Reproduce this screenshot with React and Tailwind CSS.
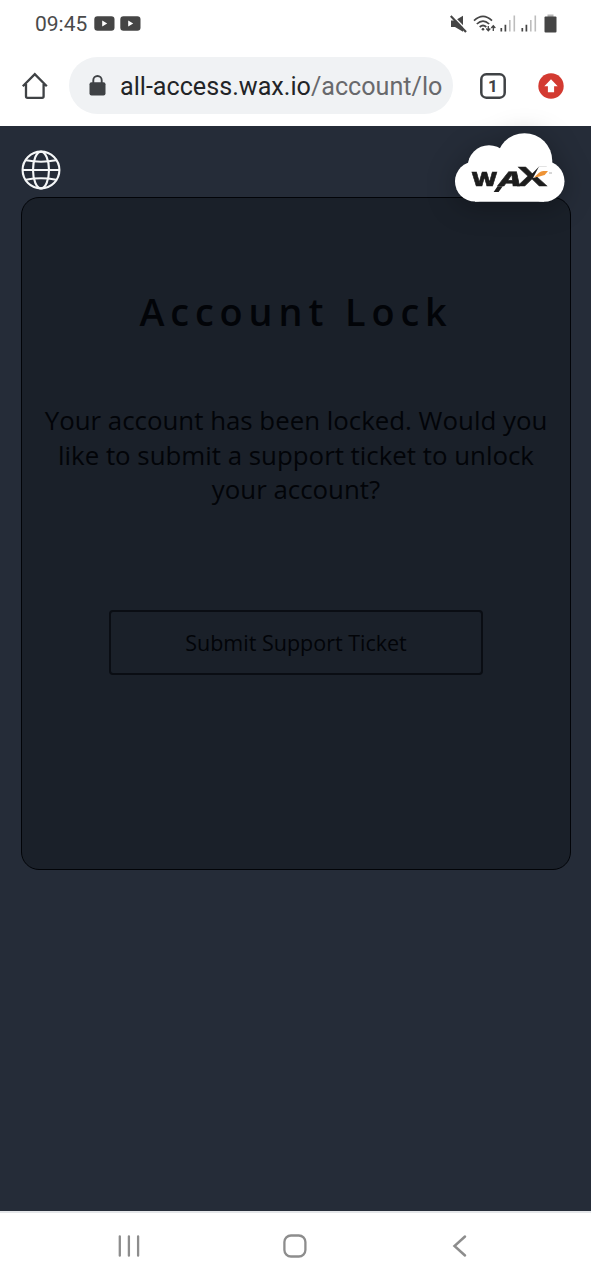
import React from "react";

function YouTubeBadge() {
  return (
    <svg className="h-[15px] w-[21px]" viewBox="0 0 21 15">
      <rect x="0.3" y="0.3" width="20.2" height="14.4" rx="3.2" fill="#454545" />
      <path d="M8.2 4.5v6l5-3z" fill="#fff" />
    </svg>
  );
}

function Signal() {
  return (
    <svg className="h-[17px] w-[16px]" viewBox="0 0 16 17">
      <path d="M1.3 13v3.5M5.4 9.8v6.7" stroke="#454545" strokeWidth="1.7" />
      <path d="M9.8 5v11.5M14.3 0.5v16" stroke="#bdbdbd" strokeWidth="1.6" />
    </svg>
  );
}

function StatusBar() {
  return (
    <div className="flex h-12 items-center pl-[35px] pr-[34px]">
      <span className="w-[53px] whitespace-nowrap font-[Roboto,sans-serif] text-[21px] leading-6 text-[#4a4a4a]">09:45</span>
      <div className="mb-[2px] ml-[6px] flex gap-[5px]">
        <YouTubeBadge />
        <YouTubeBadge />
      </div>
      <div className="mb-px ml-auto flex items-center">
        <svg className="h-[18px] w-[17px]" viewBox="0 0 17 18">
          <path d="M1 5.5h4L13 0.8v16L5 12H1z" fill="#454545" />
          <path d="M2.2 0.3L17 15.5" stroke="#fff" strokeWidth="1.6" />
          <path d="M0.7 1L16 17" stroke="#454545" strokeWidth="2.2" />
        </svg>
        <svg className="ml-[6px] h-[18px] w-[24px]" viewBox="0 0 24 18">
          <path d="M1 5.7Q10 -2.8 19 5.7M3.8 9Q10 3.2 16.2 9M6.7 12Q10 9 13.3 12" fill="none" stroke="#454545" strokeWidth="1.7" />
          <circle cx="10" cy="14.2" r="1.3" fill="#454545" />
          <path d="M15.3 11v4.6M13.3 13.5l2 2.3 2-2.3M20.3 16v-4.6M18.3 13l2-2.3 2 2.3" fill="none" stroke="#454545" strokeWidth="1.3" />
        </svg>
        <div className="ml-[3px] flex gap-[5px]">
          <Signal />
          <Signal />
        </div>
        <svg className="ml-[7px] h-[19px] w-[13px]" viewBox="0 0 13 19">
          <rect x="3.5" y="0.5" width="6" height="3" fill="#b5b5b5" />
          <rect x="0.5" y="2.5" width="12" height="16" rx="1" fill="#454545" />
        </svg>
      </div>
    </div>
  );
}

function BrowserBar() {
  return (
    <div className="flex h-[78px] items-center pb-[3px] pl-[21px] font-[Roboto,sans-serif]">
      <svg className="h-[28px] w-[28px]" viewBox="0 0 28 28">
        <path d="M1.8 14.3L13.8 2.2 25.8 14.3M5 12v12.3q0 1.5 1.5 1.5h14.6q1.5 0 1.5-1.5V12" fill="none" stroke="#3f4245" strokeWidth="2.3" />
      </svg>
      <div className="ml-5 flex h-[57px] w-[384px] items-center rounded-full bg-[#f0f2f4] pl-[20px]">
        <svg className="h-[21px] w-[17px]" viewBox="0 0 17 21">
          <path d="M4.3 9V5.2a4.2 4.2 0 0 1 8.4 0V9" fill="none" stroke="#3f4245" strokeWidth="1.9" />
          <rect x="0.5" y="7.3" width="16" height="13.2" rx="2" fill="#3f4245" />
        </svg>
        <span className="ml-[14px] mt-[2px] whitespace-nowrap text-[25.15px] leading-8 text-[#222427]">
          all-access.wax.io<span className="text-[#68696c]">/account/lo</span>
        </span>
      </div>
      <svg className="ml-[27px] h-[26px] w-[26px]" viewBox="0 0 26 26">
        <rect x="1.3" y="1.3" width="23.4" height="23.4" rx="5" fill="none" stroke="#3f4245" strokeWidth="2.5" />
        <text x="13" y="18.8" textAnchor="middle" fontSize="17" fontWeight="700" fontFamily="Roboto, sans-serif" fill="#3f4245">1</text>
      </svg>
      <svg className="ml-[31.5px] h-[26px] w-[26px]" viewBox="0 0 26 26">
        <circle cx="13" cy="13" r="12.7" fill="#d33a31" />
        <path d="M13 6.2l6.7 7h-3.6v6h-6.2v-6H6.3z" fill="#fff" />
      </svg>
    </div>
  );
}

function WaxLogo() {
  return (
    <svg className="h-[70px] w-[110px] drop-shadow-[0_4px_14px_rgba(0,0,0,0.3)]" viewBox="0 0 110 70">
      <g fill="#fff">
        <circle cx="20" cy="49.5" r="20" />
        <circle cx="34" cy="34.5" r="21.3" />
        <circle cx="69.5" cy="29" r="27.8" />
        <circle cx="89" cy="49.3" r="20.5" />
        <path d="M20 30h69v39.8H20z" />
      </g>
      <g fontFamily="Open Sans, sans-serif" fill="#1d1d1d" stroke="#1d1d1d">
        <text transform="translate(16.6 54.4) scale(1.36 1)" fontWeight="800" fontSize="19.5" strokeWidth="0.5" textLength="19" lengthAdjust="spacingAndGlyphs">W</text>
        <text transform="translate(42.5 54.4) skewX(-16)" fontWeight="800" fontSize="20" strokeWidth="0.5" textLength="22" lengthAdjust="spacingAndGlyphs">A</text>
        <text transform="translate(62.5 54.4)" fontWeight="700" fontSize="26" strokeWidth="0.4" textLength="29.5" lengthAdjust="spacingAndGlyphs">X</text>
      </g>
      <path d="M38.6 60l4-5.8h5.2l-4.2 5.8z" fill="#1d1d1d" />
      <path d="M78 46L84 34.5h12v6z" fill="#fff" />
      <path d="M79 45.5l5-4.8q2-1.8 4.3-1.8h4.7l-3.3 4.2-6.2 1.6z" fill="#ee9437" />
      <path d="M94 41h3" stroke="#999" strokeWidth="0.8" />
    </svg>
  );
}

function Globe() {
  return (
    <svg className="ml-[-0.5px] h-10 w-10" viewBox="0 0 40 40" fill="none" stroke="#f5f7f8" strokeWidth="2.1">
      <circle cx="20" cy="20" r="18.4" />
      <ellipse cx="20" cy="20" rx="8" ry="18.4" />
      <path d="M1.5 20h37M5 10.3q15 2.8 30 0M5 29.7q15-2.8 30 0" />
    </svg>
  );
}

function AndroidNav() {
  return (
    <div className="flex h-[69px] items-start justify-between border-t-2 border-[#e4e6e9] bg-white px-[117px] pt-[21px]">
      <svg className="h-[24px] w-[24px]" viewBox="0 0 24 24" stroke="#8d8d8d" strokeWidth="2.3" strokeLinecap="round">
        <path d="M2.8 2.3v19.4M11.9 2.3v19.4M21.1 2.3v19.4" />
      </svg>
      <svg className="h-[24px] w-[24px] overflow-visible" viewBox="0 0 24 24" fill="none" stroke="#8d8d8d" strokeWidth="2.3">
        <rect x="0.4" y="1.5" width="21" height="21" rx="6.6" />
      </svg>
      <svg className="h-[24px] w-[24px]" viewBox="0 0 24 24" fill="none" stroke="#8d8d8d" strokeWidth="2.5" strokeLinecap="round">
        <path d="M15 2.5L4.5 12 15 21.5" />
      </svg>
    </div>
  );
}

export default function App() {
  return (
    <div className="flex h-[1280px] w-[591px] flex-col overflow-hidden bg-white">
      <StatusBar />
      <BrowserBar />
      <main className="relative flex-1 bg-[#252c38] px-[21px] font-['Open_Sans',sans-serif]">
        <div className="flex h-[71px] items-center pt-[16px]">
          <Globe />
        </div>
        <div className="absolute left-[455px] top-[6px]">
          <WaxLogo />
        </div>
        <section className="flex h-[673px] w-[550px] flex-col items-center rounded-[18px] border-[1.5px] border-[#020408] bg-[#1a2029] text-center text-[#020408]">
          <h1 className="mt-[88px] whitespace-nowrap text-[37.8px] font-semibold leading-[52px] tracking-[5.9px]">Account Lock</h1>
          <p className="mt-[65px] whitespace-nowrap text-[25.85px] leading-[34.7px]">
            Your account has been locked. Would you
            <br />
            like to submit a support ticket to unlock
            <br />
            your account?
          </p>
          <button className="mt-[103px] h-[65px] w-[374px] rounded-[4px] border-2 border-[#0a0d13] pt-[2px] text-[21.5px]">Submit Support Ticket</button>
        </section>
      </main>
      <AndroidNav />
    </div>
  );
}
